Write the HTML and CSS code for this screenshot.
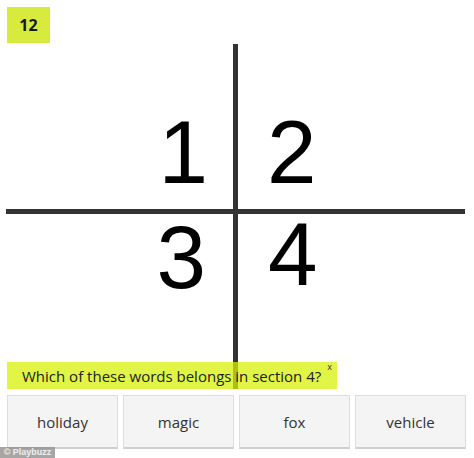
FILE: index.html
```html
<!DOCTYPE html>
<html>
<head>
<meta charset="utf-8">
<link rel="stylesheet" href="styles.css">
</head>
<body>
<div class="page">
  <div class="badge">12</div>
  <div class="board">
    <div class="cell c1"><span class="digit">1</span></div>
    <div class="vline"></div>
    <div class="cell c2"><span class="digit">2</span></div>
    <div class="hline"></div>
    <div class="cell c3"><span class="digit">3</span></div>
    <div class="cell c4"><span class="digit">4</span></div>
  </div>
  <div class="question">
    <span class="qtext">Which of these words belongs in section 4?</span>
    <span class="close">x</span>
  </div>
  <div class="answers">
    <div class="answer">holiday</div>
    <div class="answer">magic</div>
    <div class="answer">fox</div>
    <div class="answer">vehicle</div>
  </div>
  <div class="watermark">© Playbuzz</div>
</div>
</body>
</html>
```

FILE: styles.css
```css
html, body {
  margin: 0;
  padding: 0;
  background: #ffffff;
}

.page {
  position: relative;
  width: 474px;
  height: 458px;
  overflow: hidden;
  font-family: "Open Sans", "Noto Sans", sans-serif;
  color: #222;
}

.badge {
  margin: 7px 0 0 7px;
  width: 43px;
  height: 36px;
  background: #d6eb3e;
  font-weight: 700;
  font-size: 16px;
  line-height: 36px;
  text-align: center;
  color: #1a1a1a;
}

.board {
  margin: 1px 0 0 6px;
  display: grid;
  grid-template-columns: 227px 5px 227px;
  grid-template-rows: 165px 5px 175px;
}

.vline {
  grid-column: 2;
  grid-row: 1 / 4;
  background: #333333;
}

.hline {
  grid-column: 1 / 4;
  grid-row: 2;
  background: #333333;
}

.cell {
  display: flex;
  align-items: flex-start;
}

.digit {
  font-family: "Liberation Sans", Arial, sans-serif;
  font-size: 89px;
  line-height: 64px;
  color: #000;
}

.c1 {
  grid-column: 1;
  grid-row: 1;
  justify-content: flex-end;
  padding: 76px 25px 0 0;
}

.c2 {
  grid-column: 3;
  grid-row: 1;
  justify-content: flex-start;
  padding: 76px 0 0 29px;
}

.c3 {
  grid-column: 1;
  grid-row: 3;
  justify-content: flex-end;
  padding: 11px 27px 0 0;
}

.c4 {
  grid-column: 3;
  grid-row: 3;
  justify-content: flex-start;
  padding: 8px 0 0 30px;
}

.question {
  position: relative;
  margin: -27px 0 0 7px;
  width: 330px;
  height: 27px;
  background: rgba(215, 242, 8, 0.75);
  display: flex;
  align-items: center;
  padding-left: 15px;
  box-sizing: border-box;
}

.qtext {
  font-size: 15px;
  color: #222;
  white-space: nowrap;
}

.close {
  position: absolute;
  right: 5px;
  top: 0px;
  font-size: 9px;
  line-height: 10px;
  color: #333;
}

.answers {
  margin: 6px 0 0 7px;
  display: flex;
  gap: 5px;
}

.answer {
  width: 111px;
  height: 54px;
  box-sizing: border-box;
  background: #f4f4f4;
  border: 1px solid #dedede;
  border-bottom: 2px solid #cfcfcf;
  display: flex;
  align-items: center;
  justify-content: center;
  font-size: 15px;
  color: #333;
}

.watermark {
  position: absolute;
  left: 0;
  bottom: 0;
  width: 55px;
  height: 11px;
  background: rgba(150, 150, 150, 0.85);
  color: #eeeeee;
  font-family: "Liberation Sans", Arial, sans-serif;
  font-weight: 700;
  font-size: 9px;
  line-height: 11px;
  text-align: center;
  white-space: nowrap;
}
```
